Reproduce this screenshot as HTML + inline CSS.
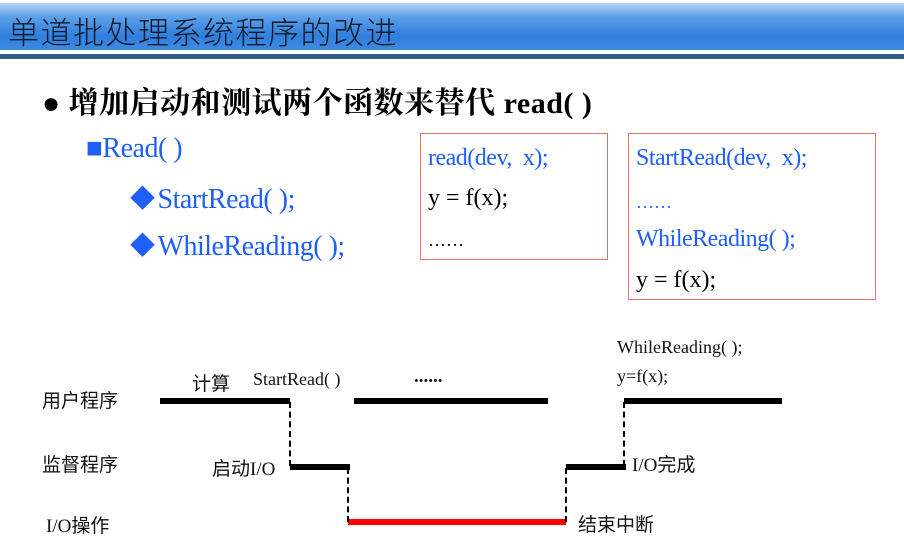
<!DOCTYPE html>
<html><head><meta charset="utf-8"><style>
body{margin:0;width:904px;height:544px;background:#fff;position:relative;overflow:hidden;font-family:"Liberation Serif","Noto Serif CJK SC",serif}
.a{position:absolute;white-space:nowrap}
.hdr{position:absolute;left:0;top:3px;width:904px;height:47px;background:linear-gradient(#b5d4f5 0%,#5c9fe8 30%,#2f7fdd 70%,#3d8ae0 100%)}
.ln{position:absolute;left:0;top:54px;width:904px;height:5px;background:#2f5f85}
.blue{color:#1f5ff5}
.box{position:absolute;border:1.5px solid #e87070}
.k{position:absolute;background:#000}
.d{position:absolute;width:0;border-left:2px dashed #000}
.s{font-family:"Liberation Serif","Noto Sans CJK SC",serif;font-size:19px;color:#111}
.dm{font-size:25px;vertical-align:1px;margin-right:3px}
</style></head><body>
<div class="hdr"></div>
<div class="ln"></div>
<div class="a" style="left:8px;top:8px;font-size:31px;letter-spacing:1.5px;color:#0e1a2a;font-family:'Noto Sans CJK SC',sans-serif;font-weight:300">单道批处理系统程序的改进</div>
<div class="a" style="left:42px;top:78px;font-size:30px;font-weight:bold;color:#000;letter-spacing:0.5px">● 增加启动和测试两个函数来替代 read( )</div>
<div class="a blue" style="left:86px;top:133px;font-size:28px;letter-spacing:-0.5px">■Read( )</div>
<div class="a blue" style="left:130px;top:179px;font-size:28px;letter-spacing:-0.5px"><span class="dm">◆</span>StartRead( );</div>
<div class="a blue" style="left:130px;top:226px;font-size:28px;letter-spacing:-0.5px"><span class="dm">◆</span>WhileReading( );</div>
<div class="box" style="left:420px;top:133px;width:186px;height:125px"></div>
<div class="box" style="left:628px;top:133px;width:246px;height:165px"></div>
<div class="a blue" style="left:428px;top:145px;font-size:24px;letter-spacing:-0.5px">read(dev,&nbsp; x);</div>
<div class="a" style="left:428px;top:185px;font-size:24px">y = f(x);</div>
<div class="a" style="left:428px;top:230px;font-size:18px">……</div>
<div class="a blue" style="left:636px;top:145px;font-size:24px;letter-spacing:-0.5px">StartRead(dev,&nbsp; x);</div>
<div class="a blue" style="left:636px;top:192px;font-size:18px">……</div>
<div class="a blue" style="left:636px;top:226px;font-size:24px;letter-spacing:-0.5px">WhileReading( );</div>
<div class="a" style="left:636px;top:267px;font-size:24px">y = f(x);</div>

<div class="a s" style="left:617px;top:337px;font-size:18px">WhileReading( );</div>
<div class="a s" style="left:617px;top:366px;font-size:18px">y=f(x);</div>
<div class="a s" style="left:192px;top:369px">计算</div>
<div class="a s" style="left:253px;top:369px;font-size:18px">StartRead( )</div>
<div class="a s" style="left:414px;top:366px;font-weight:bold">......</div>
<div class="a s" style="left:42px;top:386px">用户程序</div>
<div class="a s" style="left:42px;top:450px">监督程序</div>
<div class="a s" style="left:46px;top:511px">I/O操作</div>
<div class="a s" style="left:212px;top:454px">启动I/O</div>
<div class="a s" style="left:632px;top:450px">I/O完成</div>
<div class="a s" style="left:578px;top:510px">结束中断</div>

<div class="k" style="left:160px;top:398px;width:130px;height:6px"></div>
<div class="k" style="left:354px;top:398px;width:194px;height:6px"></div>
<div class="k" style="left:624px;top:398px;width:158px;height:6px"></div>
<div class="k" style="left:290px;top:464px;width:60px;height:6px"></div>
<div class="k" style="left:566px;top:464px;width:60px;height:6px"></div>
<div class="a" style="left:348px;top:519px;width:218px;height:6px;background:#f00"></div>
<div class="d" style="left:289px;top:402px;height:64px"></div>
<div class="d" style="left:347px;top:468px;height:54px"></div>
<div class="d" style="left:565px;top:468px;height:54px"></div>
<div class="d" style="left:623px;top:402px;height:64px"></div>
</body></html>
